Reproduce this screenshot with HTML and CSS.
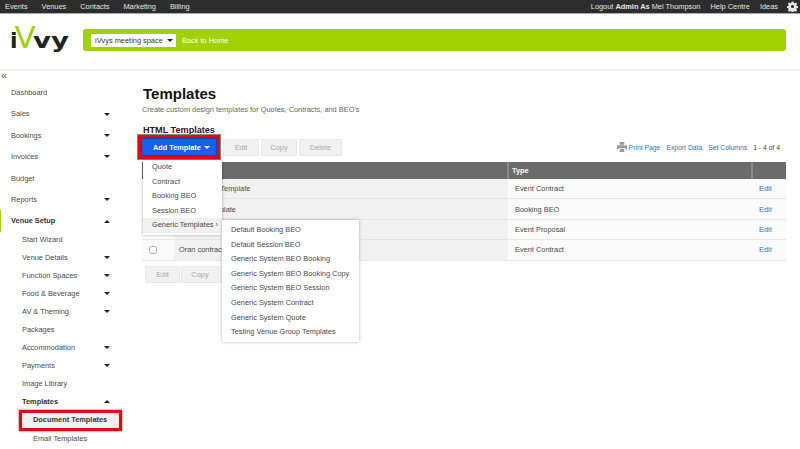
FILE: index.html
```html
<!DOCTYPE html>
<html lang="en">
<head>
  <meta charset="UTF-8">
  <title>Templates</title>
  <link rel="stylesheet" href="styles.css">
</head>
<body>

  <!-- top bar -->
  <div class="topbar">
    <div class="topbar-left">
      <a>Events</a>
      <a>Venues</a>
      <a>Contacts</a>
      <a>Marketing</a>
      <a>Billing</a>
    </div>
    <div class="topbar-right">
      <a>Logout <b>Admin As</b> Mel Thompson</a>
      <a>Help Centre</a>
      <a>Ideas</a>
      <svg class="gear" width="11" height="11" viewBox="0 0 24 24">
        <path fill="#e8e8e8" fill-rule="evenodd" d="M10 1h4l.6 3.2 2 .8L19.300 3.200l2.800 2.800-1.800 2.700.8 2 3 .6v4l-3 .6-.8 2 1.800 2.700-2.800 2.800-2.700-1.800-2 .8-.6 3h-4l-.6-3-2-.8-2.700 1.800-2.800-2.800 1.800-2.700-.8-2-3-.6v-4l3-.6.8-2-1.800-2.700 2.800-2.800 2.700 1.800 2-.8zM12 8.500a3.500 3.500 0 1 0 0 7 3.500 3.500 0 0 0 0-7z"/>
      </svg>
    </div>
  </div>

  <!-- logo and venue bar -->
  <div class="header">
    <div class="logo">i<span class="logo-v">V</span><span class="logo-rest">vy</span></div>
    <div class="venue-bar">
      <div class="venue-select">iVvys meeting space<i class="caret"></i></div>
      <a class="back-home">Back to Home</a>
    </div>
  </div>

  <div class="main">
    <div class="sidebar">
      <div class="collapse">«</div>
      <ul class="nav">
        <li>Dashboard</li>
        <li>Sales<i class="caret"></i></li>
        <li>Bookings<i class="caret"></i></li>
        <li>Invoices<i class="caret"></i></li>
        <li>Budget</li>
        <li>Reports<i class="caret"></i></li>
        <li class="open">Venue Setup<i class="caret up"></i></li>
      </ul>
      <ul class="subnav">
        <li>Start Wizard</li>
        <li>Venue Details<i class="caret"></i></li>
        <li>Function Spaces<i class="caret"></i></li>
        <li>Food &amp; Beverage<i class="caret"></i></li>
        <li>AV &amp; Theming<i class="caret"></i></li>
        <li>Packages</li>
        <li>Accommodation<i class="caret"></i></li>
        <li>Payments<i class="caret"></i></li>
        <li>Image Library</li>
        <li class="open">Templates<i class="caret up"></i></li>
        <li class="third current">Document Templates</li>
        <li class="third">Email Templates</li>
      </ul>
    </div>

    <div class="content">
      <h1>Templates</h1>
      <p class="lead">Create custom design templates for Quotes, Contracts, and BEO's</p>
      <h2>HTML Templates</h2>

      <div class="toolbar">
        <div class="add-wrap">
          <button class="btn-add">Add Template<i class="caret white"></i></button>

          <ul class="menu">
            <li>Quote</li>
            <li>Contract</li>
            <li>Booking BEO</li>
            <li>Session BEO</li>
            <li class="hover">Generic Templates<span class="arrow">›</span></li>
          </ul>
          <ul class="menu submenu">
            <li>Default Booking BEO</li>
            <li>Default Session BEO</li>
            <li>Generic System BEO Booking</li>
            <li>Generic System BEO Booking Copy</li>
            <li>Generic System BEO Session</li>
            <li>Generic System Contract</li>
            <li>Generic System Quote</li>
            <li>Testing Venue Group Templates</li>
          </ul>
        </div>
        <button class="btn">Edit</button>
        <button class="btn">Copy</button>
        <button class="btn">Delete</button>
        <div class="tools">
          <svg class="print-icon" width="10" height="10" viewBox="0 0 11 11">
            <path fill="#9a9a9a" d="M3 0h5v3H3zM1 3.500h9a1 1 0 0 1 1 1V8H9V6.500H2V8H0V4.500a1 1 0 0 1 1-1zM3 7.500h5V11H3z"/>
          </svg>
          <a>Print Page</a>
          <a>Export Data</a>
          <a>Set Columns</a>
          <span class="count">1 - 4 of 4</span>
        </div>
      </div>

      <table class="grid">
        <thead>
          <tr>
            <th class="c-check"></th>
            <th class="c-name">Name</th>
            <th class="c-type">Type</th>
            <th class="c-action"></th>
          </tr>
        </thead>
        <tbody>
          <tr><td class="c-check"><input type="checkbox"></td><td class="c-name">Oran Venue Template</td><td class="c-type">Event Contract</td><td class="c-action"><a>Edit</a></td></tr>
          <tr><td class="c-check"><input type="checkbox"></td><td class="c-name">Sample Template</td><td class="c-type">Booking BEO</td><td class="c-action"><a>Edit</a></td></tr>
          <tr><td class="c-check"><input type="checkbox"></td><td class="c-name">Proposal Template</td><td class="c-type">Event Proposal</td><td class="c-action"><a>Edit</a></td></tr>
          <tr><td class="c-check"><input type="checkbox"></td><td class="c-name">Oran contract</td><td class="c-type">Event Contract</td><td class="c-action"><a>Edit</a></td></tr>
        </tbody>
      </table>

      <div class="toolbar-bottom">
        <button class="btn">Edit</button>
        <button class="btn">Copy</button>
        <button class="btn">Delete</button>
      </div>
    </div>
  </div>

</body>
</html>
```

FILE: styles.css
```css
html, body {
  margin: 0;
  padding: 0;
}

body {
  width: 800px;
  height: 449px;
  overflow: hidden;
  background-color: #fff;
  color: #4a4a4a;
  font-family: "Liberation Sans", Arial, sans-serif;
  font-size: 7.4px;
}

ul {
  list-style: none;
  margin: 0;
  padding: 0;
}

.caret {
  display: inline-block;
  width: 0;
  height: 0;
  border-left: 3px solid transparent;
  border-right: 3px solid transparent;
  border-top: 3px solid #222;
}

.caret.up {
  border-top: 0;
  border-bottom: 3px solid #222;
}

.caret.white {
  border-top-color: #fff;
}

/* top bar */
.topbar {
  height: 13px;
  background-color: #2d2d2d;
  border-bottom: 1px solid #aaa;
  color: #e6e6e6;
  display: flex;
  justify-content: space-between;
  align-items: center;
  line-height: 12px;
}

.topbar-left {
  display: flex;
  gap: 14px;
  padding-left: 5px;
}

.topbar-right {
  display: flex;
  align-items: center;
  gap: 10px;
  padding-right: 2px;
}

.gear {
  margin-left: -1px;
}

/* header */
.header {
  height: 55px;
  display: flex;
  align-items: flex-start;
  border-bottom: 2px solid #f1f1f1;
}

.logo {
  width: 73px;
  height: 36px;
  margin: 5px 0 0 10px;
  color: #222;
  font-family: "DejaVu Sans", sans-serif;
  font-weight: bold;
  font-size: 22px;
  line-height: 36px;
  white-space: nowrap;
}

.logo-v {
  color: #9fd200;
  font-size: 31px;
  font-weight: normal;
  margin-left: -3px;
  margin-right: -3px;
}

.logo-rest {
  display: inline-block;
  transform: scaleX(1.25);
  transform-origin: left center;
}

.venue-bar {
  width: 703px;
  height: 22px;
  margin-top: 15px;
  background-color: #9fd200;
  border-radius: 3px;
  display: flex;
  align-items: center;
  padding-left: 8px;
  box-sizing: border-box;
}

.venue-select {
  width: 85px;
  height: 13px;
  box-sizing: border-box;
  background-color: #fff;
  color: #333;
  padding: 0 3px 0 4px;
  display: flex;
  justify-content: space-between;
  align-items: center;
}

.back-home {
  color: #fff;
  margin-left: 6px;
}

/* sidebar */
.main {
  display: flex;
}

.sidebar {
  width: 142px;
  flex: none;
}

.collapse {
  height: 11px;
  padding-left: 1px;
  font-size: 11px;
  line-height: 9px;
  color: #555;
}

.nav li {
  height: 21.400px;
  line-height: 21.400px;
  padding: 0 32px 0 11px;
  display: flex;
  justify-content: space-between;
  align-items: center;
}

.nav li.open {
  font-weight: bold;
  color: #333;
  border-left: 1px solid #9fd200;
  padding-left: 10px;
}

.subnav {
  margin-top: -1px;
}

.subnav li {
  height: 18px;
  line-height: 18px;
  padding: 0 32px 0 22px;
  display: flex;
  justify-content: space-between;
  align-items: center;
  white-space: nowrap;
}

.subnav li.open {
  font-weight: bold;
  color: #333;
}

.subnav li.third {
  padding-left: 33px;
}

.subnav li.current {
  margin: -1px 0 -1px 19px;
  padding: 0 0 0 11px;
  width: 103px;
  height: 21px;
  box-sizing: border-box;
  background-color: #f1f1f1;
  font-weight: bold;
  color: #333;
  border: 3px solid #e30613;
  box-shadow: 0 0 2px #555;
}

/* content */
.content {
  width: 644px;
  padding-top: 14px;
}

h1 {
  margin: 0 0 0 1px;
  font-size: 15px;
  line-height: 18px;
  color: #111;
}

.lead {
  margin: 1px 0 0;
  line-height: 11px;
  color: #666;
}

h2 {
  margin: 9px 0 0 1px;
  font-size: 9.100px;
  line-height: 12px;
  color: #222;
}

.toolbar {
  display: flex;
  align-items: center;
  gap: 2px;
  height: 18px;
  margin-top: 2px;
}

.add-wrap {
  position: relative;
  width: 76px;
  margin-right: 4px;
  margin-left: -1px;
  height: 18px;
}

.btn {
  width: 36px;
  height: 17px;
  padding: 0;
  background-color: #f1f1f1;
  border: 1px solid #e8e8e8;
  border-radius: 1px;
  color: #aaa;
  font-family: inherit;
  font-size: 7.400px;
}

.btn:nth-of-type(3) {
  width: 38px;
}

.btn:last-of-type {
  width: 43px;
}

.btn-add {
  position: absolute;
  left: 0;
  top: 0;
  width: 76px;
  height: 18px;
  box-sizing: border-box;
  padding: 0 6px 0 11px;
  display: flex;
  justify-content: space-between;
  align-items: center;
  background-color: #1560f0;
  border: 1px solid #0f47b5;
  color: #fff;
  font-family: inherit;
  font-size: 7.300px;
  font-weight: bold;
  white-space: nowrap;
  outline: 3px solid #e30613;
  box-shadow: 0 0 0 4px #888;
}

.menu {
  position: absolute;
  z-index: 2;
  left: 2px;
  top: 22px;
  width: 79px;
  padding-bottom: 2px;
  background-color: #fff;
  box-shadow: 0 0 3px rgba(0, 0, 0, 0.3);
}

.menu li {
  height: 14.600px;
  line-height: 14.600px;
  padding-left: 9px;
  white-space: nowrap;
}

.menu li.hover {
  background-color: #f1f1f1;
}

.arrow {
  margin-left: 2px;
}

.submenu {
  left: 81px;
  top: 82px;
  width: 137px;
  padding: 3px 0 2px;
}

.tools {
  margin-left: auto;
  display: flex;
  align-items: center;
  gap: 6px;
  padding-right: 6px;
  color: #2a7ab8;
  font-size: 6.800px;
}

.print-icon {
  margin-right: -4px;
}

.count {
  color: #444;
}

/* table */
.grid {
  width: 644px;
  margin-top: 6px;
  border-collapse: separate;
  border-spacing: 0;
  table-layout: fixed;
}

.grid th {
  height: 17px;
  padding: 0 3px;
  background-color: #6b6b6b;
  color: #fff;
  font-weight: bold;
  text-align: left;
  border-right: 2px solid #8a8a8a;
  box-sizing: border-box;
}

.grid th:last-child {
  border-right: 0;
}

.grid td {
  height: 20.400px;
  box-sizing: border-box;
  padding: 0 3px 0 6px;
  background-color: #fafafa;
  border-bottom: 1px solid #e6e6e6;
}

.grid td.c-name {
  background-color: #f1f1f1;
  border-right: 1px solid #fff;
}

.grid td.c-name,
.grid td.c-check {
  padding-left: 5px;
}

.c-check {
  width: 32px;
}

.grid .c-name {
  width: 335px;
}

.c-type {
  width: 244px;
}

.c-action {
  width: 33px;
  color: #2a7ab8;
}

input[type="checkbox"] {
  width: 8px;
  height: 8px;
  margin: 0 0 0 2px;
  vertical-align: middle;
  opacity: 0.6;
}

.toolbar-bottom {
  display: flex;
  gap: 1px;
  margin: 5px 0 0 3px;
}

.toolbar-bottom .btn {
  width: 35px;
}

.toolbar-bottom .btn:nth-of-type(2) {
  width: 38px;
}

.toolbar-bottom .btn:last-of-type {
  width: 42px;
}
```
